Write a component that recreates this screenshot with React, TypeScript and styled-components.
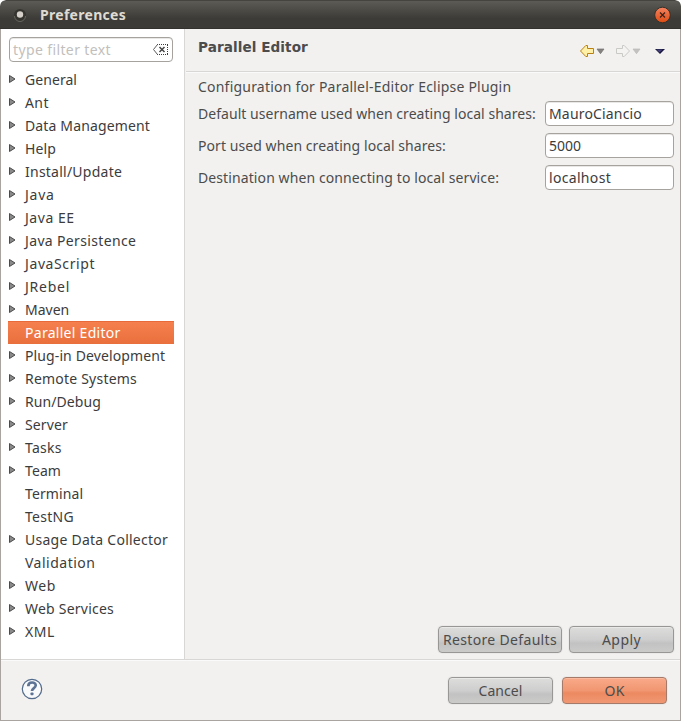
import React from "react";
import styled, { createGlobalStyle, css } from "styled-components";

const GlobalStyle = createGlobalStyle`
  *, *::before, *::after { box-sizing: border-box; }
  body { margin: 0; background: #fff; overflow: hidden; }
`;

const Window = styled.div`
  width: 681px;
  height: 721px;
  display: flex;
  flex-direction: column;
  overflow: hidden;
  border-radius: 6px 6px 0 0;
  background: #f2f1f0;
  color: #4c4c4c;
  font: 14px/20px "Noto Sans", "Open Sans", sans-serif;
  white-space: nowrap;
`;

const TitleBar = styled.header`
  flex: 0 0 29px;
  display: flex;
  align-items: center;
  padding: 0 11px 0 12px;
  border-top: 1px solid #45443f;
  border-bottom: 1px solid #33322e;
  background: linear-gradient(#5c5b55, #3c3b37 65%);
  border-radius: 6px 6px 0 0;
`;

const TitleIcon = styled.svg`
  flex: none;
  margin: 0 12px 0 0;
`;

const WindowTitle = styled.h1`
  flex: 1;
  margin: 0;
  padding-top: 1px;
  color: #dfdbd2;
  font-size: 14px;
  font-weight: 700;
  letter-spacing: 0.29px;
`;

const CloseButton = styled.button`
  display: flex;
  flex: none;
  padding: 0;
  border: 0;
  background: none;
  margin-right: -1px;
`;

const Frame = styled.div`
  flex: 1;
  display: flex;
  flex-direction: column;
  border: 1px solid #a9a49f;
  border-top: 0;
`;

const Body = styled.div`
  flex: 0 0 631px;
  display: flex;
  border-bottom: 1px solid #d9d7d5;
`;

const Sidebar = styled.aside`
  flex: 0 0 184px;
  padding: 8px 0 0 8px;
  background: #fff;
  border-right: 1px solid #d9d7d5;
`;

const fieldBox = css`
  border: 1px solid #a6a29e;
  border-radius: 4px;
  background: #fff;
  box-shadow: inset 0 1px 0 #e9e8e7;
`;

const FilterBox = styled.div`
  ${fieldBox}
  width: 164px;
  height: 25px;
  display: flex;
  align-items: center;
  justify-content: space-between;
  padding: 0 4px 0 3px;
  color: #c2bfbc;
  letter-spacing: 0.38px;
`;

const Tree = styled.ul`
  list-style: none;
  margin: 6px 0 0 -1px;
  padding: 0;
`;

const TreeRow = styled.li<{ $selected?: boolean; $tracking: number }>`
  width: 166px;
  height: 23px;
  display: flex;
  padding-left: 1px;
  color: ${(p) => (p.$selected ? "#fff" : "#3c3c3c")};
  background: ${(p) => (p.$selected ? "linear-gradient(#f6804f, #e9703d)" : "none")};
  box-shadow: ${(p) => (p.$selected ? "inset 0 1px 0 #e76b3a" : "none")};
  letter-spacing: ${(p) => p.$tracking}px;
  line-height: 24px;
`;

const ArrowSlot = styled.span`
  flex: 0 0 16px;
  display: flex;
  padding-top: 7px;
`;

const Page = styled.main`
  flex: 1;
  display: flex;
  flex-direction: column;
  padding-left: 1px;
`;

const PageHeader = styled.div`
  flex: 0 0 43px;
  display: flex;
  justify-content: space-between;
  padding: 8px 13px 0 12px;
  border-bottom: 1px solid #d9d7d5;
  box-shadow: 0 1px 0 #fafafa;
`;

const PageTitle = styled.h2`
  margin: 0;
  font-family: "DejaVu Sans", sans-serif;
  font-size: 13.6px;
  font-weight: 700;
  letter-spacing: 0.07px;
  line-height: 21px;
`;

const Nav = styled.nav`
  display: flex;
  align-items: flex-start;
  padding-top: 7px;
`;

const Form = styled.div`
  flex: 1;
  padding: 5px 6px 0 12px;
`;

const Text = styled.span<{ $tracking: number }>`
  display: block;
  letter-spacing: ${(p) => p.$tracking}px;
`;

const FieldRow = styled.label`
  display: flex;
  align-items: center;
  justify-content: space-between;
  height: 25px;
  margin-bottom: 7px;
`;

const Field = styled.input<{ $tracking: number }>`
  ${fieldBox}
  width: 129px;
  height: 25px;
  padding: 0 3px;
  color: #3c3c3c;
  font: inherit;
  letter-spacing: ${(p) => p.$tracking}px;
  outline: 0;
`;

const Fields = styled.div`
  margin-top: 4px;
`;

const Actions = styled.div`
  display: flex;
  justify-content: flex-end;
  gap: 7px;
  padding: 0 6px 6px 0;
`;

const Button = styled.button<{ $width?: number; $primary?: boolean; $tracking: number }>`
  width: ${(p) => p.$width ?? 105}px;
  height: 27px;
  padding: 0;
  border: 1px solid ${(p) => (p.$primary ? "#a57a69" : "#989796")};
  border-radius: 4px;
  background: ${(p) =>
    p.$primary
      ? "linear-gradient(#f9a989, #f19771 50%, #ec8961 60%, #f09873)"
      : "linear-gradient(#dddddc, #cecece 50%, #c2c2c2 65%, #cbcbca)"};
  box-shadow: inset 0 1px 0 ${(p) => (p.$primary ? "#fbb99f" : "#e9e9e8")}, 0 0 0 1px #ebeae9;
  color: #4c4c4c;
  font: inherit;
  letter-spacing: ${(p) => p.$tracking}px;
`;

const Footer = styled.footer`
  flex: 1;
  display: flex;
  align-items: flex-start;
  justify-content: space-between;
  padding: 17px 13px 0 20px;
  box-shadow: inset 0 1px 0 #fafafa;
`;

const HelpButton = styled.button`
  display: flex;
  padding: 1px 0 0;
  border: 0;
  background: none;
`;

const FooterButtons = styled.div`
  display: flex;
  gap: 9px;
`;

const TREE: { name: string; tracking: number; leaf?: boolean }[] = [
  { name: "General", tracking: 0.06 },
  { name: "Ant", tracking: 0.4 },
  { name: "Data Management", tracking: 0.14 },
  { name: "Help", tracking: 0.1 },
  { name: "Install/Update", tracking: 0.24 },
  { name: "Java", tracking: 0.75 },
  { name: "Java EE", tracking: 0.55 },
  { name: "Java Persistence", tracking: 0.35 },
  { name: "JavaScript", tracking: 0.6 },
  { name: "JRebel", tracking: 0.75 },
  { name: "Maven", tracking: 0 },
  { name: "Parallel Editor", tracking: 0.28, leaf: true },
  { name: "Plug-in Development", tracking: 0.11 },
  { name: "Remote Systems", tracking: 0.21 },
  { name: "Run/Debug", tracking: 0.07 },
  { name: "Server", tracking: 0.14 },
  { name: "Tasks", tracking: 0.25 },
  { name: "Team", tracking: 0.09 },
  { name: "Terminal", tracking: 0.13, leaf: true },
  { name: "TestNG", tracking: 0.28, leaf: true },
  { name: "Usage Data Collector", tracking: 0.25 },
  { name: "Validation", tracking: 0.5, leaf: true },
  { name: "Web", tracking: 0.5 },
  { name: "Web Services", tracking: 0.23 },
  { name: "XML", tracking: 0.5 },
];

const FIELDS = [
  { label: "Default username used when creating local shares:", tracking: 0.04, value: "MauroCiancio", valueTracking: 0.17 },
  { label: "Port used when creating local shares:", tracking: 0.07, value: "5000", valueTracking: 0 },
  { label: "Destination when connecting to local service:", tracking: 0.1, value: "localhost", valueTracking: 0.32 },
];

const ExpandArrow = () => (
  <svg width="7" height="9" viewBox="0 0 7 9">
    <path d="M.5.500v7L6 4z" fill="#8a8a8a" stroke="#4a4a4a" />
  </svg>
);

const ClearIcon = () => (
  <svg width="15" height="11" viewBox="0 0 15 11">
    <path d="M4.500.500h10v10h-10L.500 5.500z" fill="#fff" />
    <path d="M4 .500h11M4 10.500h11M14.500 1v9" fill="none" stroke="#3c3c3c" strokeDasharray="1 1" />
    <path d="M4.500.500L.500 5.500l4 5" fill="none" stroke="#5c5c5c" />
    <path d="M6.500 3l5 5m0-5l-5 5" stroke="#444" strokeWidth="1.500" />
  </svg>
);

const NavArrow = ({ forward = false }: { forward?: boolean }) => (
  <svg width="36" height="14" viewBox="0 0 36 14">
    {forward ? (
      <path d="M.5 4.500h6v-3h1.700l5.300 5.500-5.300 5.500H6.500v-3h-6z" fill="#f4f3f2" stroke="#c9c9c6" />
    ) : (
      <path d="M13.500 4.500h-6v-3H5.800L.5 7l5.300 5.500h1.700v-3h6z" fill="#fff0a8" stroke="#b98016" />
    )}
    <path d="M17 5h7l-3.500 4.700z" fill={forward ? "#c4c2c0" : "#858381"} stroke={forward ? "#bbb9b7" : "#73716f"} strokeWidth=".7" />
  </svg>
);

const MenuArrow = () => (
  <svg width="15" height="14" viewBox="-1 0 15 14">
    <path d="M2 5h10L7 10z" fill="#17163a" />
    <path d="M3.500 5.500h6L6.500 8.500z" fill="#45407c" />
  </svg>
);

const HelpIcon = () => (
  <svg width="22" height="22" viewBox="0 0 22 22">
    <circle cx="11" cy="11" r="9.700" fill="#f8f9fa" stroke="#536b8c" strokeWidth="1.200" />
    <path d="M7.300 8.200C7.300 3.200 15 3.600 14.700 7.500c-.2 2.700-3.700 2.500-3.700 5.500" fill="none" stroke="#5d7396" strokeWidth="2.700" />
    <rect x="9.500" y="14.500" width="3" height="2.700" rx=".8" fill="#5d7396" />
  </svg>
);

export default function App() {
  return (
    <>
      <GlobalStyle />
      <Window>
        <TitleBar>
          <TitleIcon width="16" height="16" viewBox="0 0 16 16">
            <circle cx="8" cy="8" r="6" fill="#35342f" />
            <path d="M2.500 9a5.500 5.500 0 0 0 11 0" fill="none" stroke="#69675f" />
            <circle cx="8" cy="7.500" r="3.200" fill="#d5d1ca" />
          </TitleIcon>
          <WindowTitle>Preferences</WindowTitle>
          <CloseButton aria-label="Close">
            <svg width="18" height="18" viewBox="0 0 18 18">
              <defs>
                <linearGradient id="close" x2="0" y2="1">
                  <stop stopColor="#f58360" />
                  <stop offset="1" stopColor="#dd4b12" />
                </linearGradient>
              </defs>
              <circle cx="9.500" cy="9" r="7.800" fill="url(#close)" stroke="#353129" />
              <path d="M7 6.500l5 5m0-5l-5 5" stroke="#3c211a" strokeWidth="1.200" />
            </svg>
          </CloseButton>
        </TitleBar>
        <Frame>
          <Body>
            <Sidebar>
              <FilterBox>
                type filter text
                <ClearIcon />
              </FilterBox>
              <Tree>
                {TREE.map((item) => (
                  <TreeRow key={item.name} $selected={item.name === "Parallel Editor"} $tracking={item.tracking}>
                    <ArrowSlot>{!item.leaf && <ExpandArrow />}</ArrowSlot>
                    {item.name}
                  </TreeRow>
                ))}
              </Tree>
            </Sidebar>
            <Page>
              <PageHeader>
                <PageTitle>Parallel Editor</PageTitle>
                <Nav>
                  <NavArrow />
                  <NavArrow forward />
                  <MenuArrow />
                </Nav>
              </PageHeader>
              <Form>
                <Text $tracking={0.21}>Configuration for Parallel-Editor Eclipse Plugin</Text>
                <Fields>
                  {FIELDS.map((field) => (
                    <FieldRow key={field.label}>
                      <Text $tracking={field.tracking}>{field.label}</Text>
                      <Field defaultValue={field.value} $tracking={field.valueTracking} />
                    </FieldRow>
                  ))}
                </Fields>
              </Form>
              <Actions>
                <Button $width={124} $tracking={0.33}>Restore Defaults</Button>
                <Button $tracking={0.42}>Apply</Button>
              </Actions>
            </Page>
          </Body>
          <Footer>
            <HelpButton aria-label="Help">
              <HelpIcon />
            </HelpButton>
            <FooterButtons>
              <Button $tracking={0.07}>Cancel</Button>
              <Button $primary $tracking={0.2}>OK</Button>
            </FooterButtons>
          </Footer>
        </Frame>
      </Window>
    </>
  );
}
